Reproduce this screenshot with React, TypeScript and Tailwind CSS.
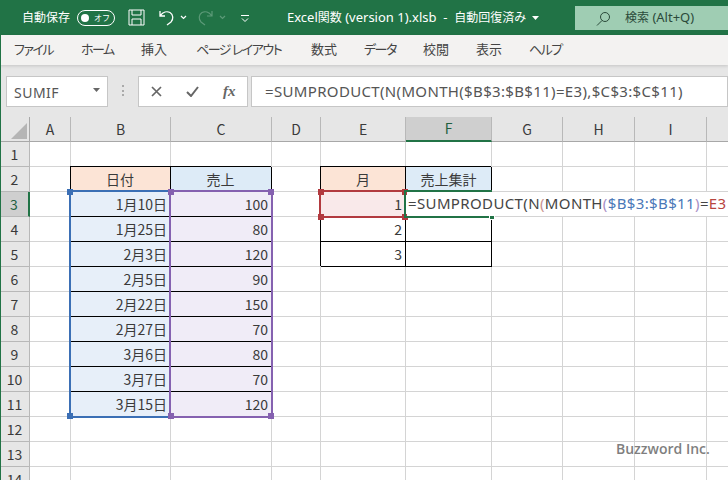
import React from "react";

const cols = [
  { l: "A", w: 41 }, { l: "B", w: 100 }, { l: "C", w: 101 }, { l: "D", w: 49 }, { l: "E", w: 85 },
  { l: "F", w: 86 }, { l: "G", w: 71 }, { l: "H", w: 72 }, { l: "I", w: 72 }, { l: "", w: 22 },
];
const dates = ["1月10日", "1月25日", "2月3日", "2月5日", "2月22日", "2月27日", "3月6日", "3月7日", "3月15日"];
const sales = ["100", "80", "120", "90", "150", "70", "80", "70", "120"];

type C = { t?: string; cls?: string };
const BOX = "border-r border-b border-black shadow-[-1px_-1px_0_0_#000]";
function cellFor(col: string, row: number): C {
  if (col === "B") {
    if (row === 2) return { t: "日付", cls: `bg-[#fce4d6] justify-center ${BOX}` };
    if (row >= 3 && row <= 11) return { t: dates[row - 3], cls: "bg-[#e7eff9] justify-end border-b border-black" };
  }
  if (col === "C") {
    if (row === 2) return { t: "売上", cls: `bg-[#ddebf7] justify-center ${BOX}` };
    if (row >= 3 && row <= 11) return { t: sales[row - 3], cls: "bg-[#f0ecf7] justify-end border-b border-black" };
  }
  if (col === "E") {
    if (row === 2) return { t: "月", cls: `bg-[#fce4d6] justify-center ${BOX}` };
    if (row === 3) return { t: "1", cls: `bg-[#f9e9ea] justify-end ${BOX}` };
    if (row === 4) return { t: "2", cls: `justify-end ${BOX}` };
    if (row === 5) return { t: "3", cls: `justify-end ${BOX}` };
  }
  if (col === "F") {
    if (row === 2) return { t: "売上集計", cls: `bg-[#ddebf7] justify-center ${BOX}` };
    if (row === 4 || row === 5) return { cls: BOX };
  }
  return { cls: "border-r border-b border-[#d4d4d4]" };
}

function Handle({ c, x, y }: { c: string; x: string; y: string }) {
  return <div className={`absolute w-[6px] h-[6px] ${c} ${x} ${y}`} />;
}

export default function App() {
  const rows = Array.from({ length: 14 }, (_, i) => i + 1);
  return (
    <div className="w-[728px] h-[480px] overflow-hidden relative flex flex-col bg-white font-['Noto_Sans','Noto_Sans_CJK_JP',sans-serif]">
      {/* Title bar */}
      <div className="h-[35px] bg-[#217346] text-white flex items-center text-[12px] shrink-0 relative">
        <span className="ml-[22px] w-[49px] whitespace-nowrap">自動保存</span>
        <div className="ml-[6px] w-[38px] h-[16px] rounded-full border border-white flex items-center justify-between pl-[3px] pr-[4px]">
          <div className="w-[8px] h-[8px] rounded-full bg-white" />
          <span className="text-[8px] leading-none">オフ</span>
        </div>
        <svg className="ml-[13px]" width="17" height="17" viewBox="0 0 17 17" fill="none" stroke="white" strokeWidth="1">
          <path d="M1 1h15v15H1zM4 1v5h9V1M4 16v-6h9v6" />
        </svg>
        <svg className="ml-[13px]" width="17" height="17" viewBox="0 0 17 17" fill="none" stroke="white" strokeWidth="1.3">
          <path d="M2 2v5h5M2.5 6.500C5 3 9 2 12 3.500c3.500 2 3.500 7 1 9.500L9 16" />
        </svg>
        <svg className="ml-[5px]" width="7" height="5" viewBox="0 0 7 5" fill="none" stroke="white" strokeWidth="1.2"><path d="M1 1l2.500 2.500L6 1" /></svg>
        <svg className="ml-[10px]" width="17" height="17" viewBox="0 0 17 17" fill="none" stroke="#5c9a78" strokeWidth="1.2">
          <path d="M15 2v5h-5M14.500 6.500C12 3 8 2 5 3.500c-3.500 2-3.500 7-1 9.500l4 3" />
        </svg>
        <svg className="ml-[5px]" width="7" height="5" viewBox="0 0 7 5" fill="none" stroke="#5c9a78" strokeWidth="1.2"><path d="M1 1l2.500 2.500L6 1" /></svg>
        <svg className="ml-[15px]" width="8" height="8" viewBox="0 0 8 8" fill="none" stroke="white" strokeWidth="1"><path d="M0 1.500h8M1 4.500l3 3 3-3" /></svg>
        <span className="ml-[38px] whitespace-nowrap text-[13px]">
          Excel<span className="text-[12px]">関数</span> (version 1).xlsb&nbsp; -&nbsp; <span className="text-[12px]">自動回復済み</span>
        </span>
        <svg className="ml-[6px]" width="7" height="4" viewBox="0 0 7 4" fill="white"><path d="M0 0h7L3.500 4z" /></svg>
        <div className="absolute left-[575px] top-[6px] w-[153px] h-[24px] bg-[#9fcdb3] text-[#2b4a3a] flex items-center">
          <svg className="ml-[21px]" width="15" height="15" viewBox="0 0 15 15" fill="none" stroke="#2b4a3a" strokeWidth="1">
            <circle cx="9" cy="6" r="4.500" /><path d="M6 9.500L1 14.500" />
          </svg>
          <span className="ml-[14px] text-[13px] whitespace-nowrap">
            <span className="text-[12px]">検索</span> (Alt+Q)
          </span>
        </div>
      </div>

      {/* Ribbon tabs */}
      <div className="h-[30px] bg-[#f3f2f1] flex items-center text-[13px] text-[#444] shrink-0 shadow-[0_1px_3px_rgba(0,0,0,0.15)] relative [font-feature-settings:'palt']">
        <span className="ml-[14px] w-[67px] whitespace-nowrap tracking-[-1.5px]">ファイル</span>
        <span className="w-[60px] whitespace-nowrap tracking-[-1.5px]">ホーム</span>
        <span className="w-[55px] whitespace-nowrap">挿入</span>
        <span className="w-[115px] whitespace-nowrap tracking-[-1.5px]">ページ レイアウト</span>
        <span className="w-[53px] whitespace-nowrap">数式</span>
        <span className="w-[59px] whitespace-nowrap tracking-[-1.5px]">データ</span>
        <span className="w-[53px] whitespace-nowrap">校閲</span>
        <span className="w-[53px] whitespace-nowrap">表示</span>
        <span className="whitespace-nowrap tracking-[-1.5px]">ヘルプ</span>
      </div>

      {/* Formula bar */}
      <div className="h-[52px] bg-[#e6e6e6] flex items-start pt-[11px] shrink-0">
        <div className="ml-[6px] w-[102px] h-[31px] bg-white border border-[#c6c6c6] flex items-center justify-between pl-[7px] pr-[7px] text-[14px] text-[#555]">
          <span className="tracking-[0.5px] mt-[2px]">SUMIF</span>
          <svg className="-mt-[3px]" width="7" height="4" viewBox="0 0 7 4" fill="#666"><path d="M0 0h7L3.500 4z" /></svg>
        </div>
        <div className="ml-[14px] mt-[9px] w-[2px] h-[11px] border-l-2 border-dotted border-[#aaa]" />
        <div className="ml-[14px] w-[110px] h-[31px] bg-white border border-[#c6c6c6] flex items-center text-[#666]">
          <svg className="ml-[12px]" width="11" height="11" viewBox="0 0 11 11" fill="none" stroke="#666" strokeWidth="1.700"><path d="M1 1l9 9M10 1l-9 9" /></svg>
          <svg className="ml-[24px]" width="13" height="11" viewBox="0 0 13 11" fill="none" stroke="#666" strokeWidth="2"><path d="M1 6l4 4 7-9" /></svg>
          <span className="ml-[24px] text-[15px] font-bold italic leading-none font-['Liberation_Serif',serif]">fx</span>
        </div>
        <div className="ml-[3px] w-[477px] h-[31px] bg-white border border-[#c6c6c6] flex items-center pl-[13px] pb-[1px] text-[15px] tracking-[0.34px] text-[#555] whitespace-nowrap">
          =SUMPRODUCT(N(MONTH($B$3:$B$11)=E3),$C$3:$C$11)
        </div>
      </div>

      {/* Sheet */}
      <div className="relative flex-1 overflow-hidden">
        <div className="grid text-[14px] text-[#3a3a3a] font-['Noto_Sans_CJK_JP','Noto_Sans',sans-serif] grid-cols-[30px_41px_100px_101px_49px_85px_86px_71px_72px_72px_22px] auto-rows-[25px]">
          {/* column header */}
          <div className="bg-[#e6e6e6] border-r border-b border-[#a8a8a8] flex items-end justify-end p-[2px]">
            <div className="w-0 h-0 border-l-[16px] border-l-transparent border-b-[16px] border-b-[#b5b5b5]" />
          </div>
          {cols.map((c) => (
            <div
              key={c.l || "J"}
              className={`flex items-center justify-center border-r border-[#b8b8b8] ${
                c.l === "F" ? "bg-[#cfcfcf] border-b-2 border-b-[#217346] text-[#1f5f3f]" : "bg-[#e6e6e6] border-b border-b-[#a8a8a8]"
              }`}
            >
              {c.l}
            </div>
          ))}
          {rows.map((r) => (
            <React.Fragment key={r}>
              <div
                className={`flex items-center justify-center border-b border-[#b8b8b8] ${
                  r === 3 ? "bg-[#cfcfcf] border-r-2 border-r-[#217346] text-[#1f5f3f]" : "bg-[#e6e6e6] border-r"
                }`}
              >
                {r}
              </div>
              {cols.map((c) => {
                const cell = cellFor(c.l, r);
                return (
                  <div
                    key={c.l || "J"}
                    className={`flex items-center pl-[3px] whitespace-nowrap ${c.l === "B" || c.l === "C" ? "pr-[4px]" : "pr-[3px]"} ${cell.cls}`}
                  >
                    {cell.t}
                  </div>
                );
              })}
            </React.Fragment>
          ))}
        </div>

        {/* Blue range B3:B11 */}
        <div className="absolute left-[69px] top-[73px] w-[102px] h-[228px] border-2 border-[#3b6fb5]">
          <Handle c="bg-[#3b6fb5]" x="-left-[4px]" y="-top-[3px]" />
          <Handle c="bg-[#3b6fb5]" x="-left-[4px]" y="-bottom-[3px]" />
        </div>
        {/* Purple range C3:C11 */}
        <div className="absolute left-[169px] top-[73px] w-[104px] h-[228px] border-2 border-[#8561b0]">
          <Handle c="bg-[#8561b0]" x="-left-[3px]" y="-top-[3px]" />
          <Handle c="bg-[#8561b0]" x="-right-[3px]" y="-top-[3px]" />
          <Handle c="bg-[#8561b0]" x="-left-[3px]" y="-bottom-[3px]" />
          <Handle c="bg-[#8561b0]" x="-right-[3px]" y="-bottom-[3px]" />
        </div>
        {/* Red range E3 */}
        <div className="absolute left-[319px] top-[73px] w-[87px] h-[28px] border-2 border-[#b23a3f]">
          <Handle c="bg-[#b23a3f]" x="-left-[3px]" y="-top-[3px]" />
          <Handle c="bg-[#b23a3f]" x="-right-[4px]" y="-top-[3px]" />
          <Handle c="bg-[#b23a3f]" x="-left-[3px]" y="-bottom-[4px]" />
          <Handle c="bg-[#b23a3f]" x="-right-[4px]" y="-bottom-[4px]" />
        </div>
        {/* In-cell editor */}
        <div className="absolute left-[404px] top-[73px] w-[324px] h-[28px] font-['Noto_Sans','Noto_Sans_CJK_JP',sans-serif]">
          <div className="absolute left-0 top-0 w-[88px] h-[28px] border-y-2 border-l-2 border-[#217346]" />
          <div className="absolute left-[85px] -bottom-[2px] w-[6px] h-[6px] bg-[#217346] border border-white" />
          <div className="absolute left-[3px] top-[2px] w-[321px] h-[24px] bg-white flex items-center pl-[1px] pb-[2px] text-[15px] tracking-[0.37px] text-[#444] whitespace-nowrap overflow-hidden">
            <span>=SUMPRODUCT(N</span>
            <span className="text-[#c9928f]">(</span>
            <span>MONTH</span>
            <span className="text-[#a78fc6]">(</span>
            <span className="text-[#4a78b8]">$B$3:$B$11</span>
            <span className="text-[#a78fc6]">)</span>
            <span>=</span>
            <span className="text-[#b8453f]">E3</span>
          </div>
        </div>

        {/* Watermark */}
        <div className="absolute left-[616px] top-[321px] text-[14px] font-semibold text-[#7f7f7f] whitespace-nowrap font-['Open_Sans',sans-serif]">
          Buzzword Inc.
        </div>
      </div>

      {/* Window edge */}
      <div className="absolute left-0 top-[35px] bottom-0 w-px bg-[#217346]" />
    </div>
  );
}
